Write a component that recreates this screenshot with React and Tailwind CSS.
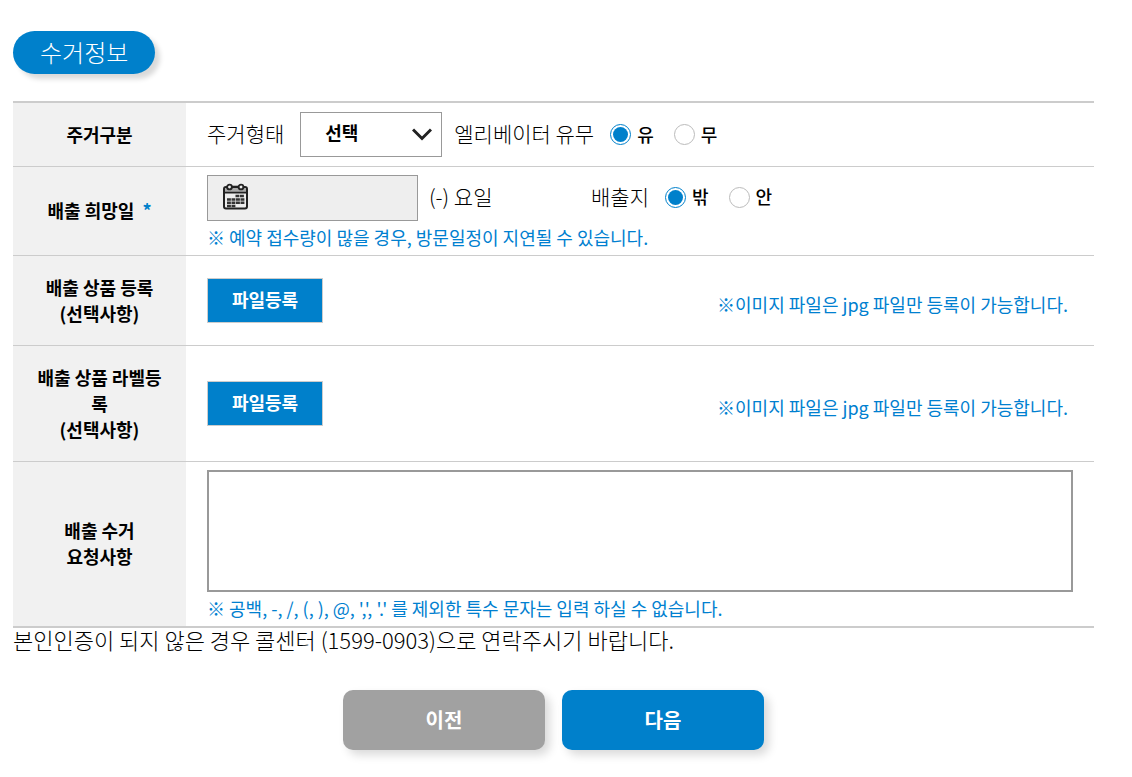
import React from "react";

function HeadCell({ children, last }) {
  return (
    <th
      scope="row"
      className={`w-[173px] bg-[#f1f1f1] px-5 pt-0 pb-[2px] text-center text-[18px] leading-[26px] font-bold break-all ${
        last ? "" : "border-b border-[#cccccc]"
      }`}
    >
      {children}
    </th>
  );
}

function Cell({ children, last, className }) {
  return (
    <td className={`px-[21px] ${className} ${last ? "" : "border-b border-[#cccccc]"}`}>
      {children}
    </td>
  );
}

function Radio({ name, label, defaultChecked }) {
  return (
    <label className="flex items-center gap-[6px] text-[18px] leading-[26px] font-medium">
      <input
        type="radio"
        name={name}
        defaultChecked={defaultChecked}
        className="size-[21px] appearance-none rounded-full border border-[#bbbbbb] bg-white bg-clip-content p-[2px] checked:border-[#0080cb] checked:bg-[#0080cb]"
      />
      <span className="pb-[2px]">{label}</span>
    </label>
  );
}

function Note({ children, className = "" }) {
  return (
    <p className={`text-[18px] leading-[26px] text-[#0080d0] ${className}`}>{children}</p>
  );
}

function CalendarIcon() {
  return (
    <svg
      aria-hidden="true"
      className="pointer-events-none absolute top-2 left-4 h-[27px] w-[25px]"
      viewBox="0 0 25 27"
      fill="none"
      stroke="#222222"
    >
      <rect x="1" y="4" width="23" height="21.5" rx="2" strokeWidth="2" />
      <path d="M2 6.5h21" stroke="#aaaaaa" strokeWidth="3" />
      <path d="M1.5 9.5h22" strokeWidth="2" />
      <path d="M8 3.5h9" strokeWidth="1.6" />
      <circle cx="6.5" cy="4" r="2.4" fill="#eeeeee" strokeWidth="1.9" />
      <circle cx="18" cy="4" r="2.4" fill="#eeeeee" strokeWidth="1.9" />
      <path
        d="M12.5 13h9M4 16.5h17.5M4 19.7h17.5M4 22.9h9"
        stroke="#333333"
        strokeWidth="2.5"
        strokeDasharray="3.9 .6"
      />
    </svg>
  );
}

function FileRow({ id }) {
  return (
    <div className="flex items-center justify-between pr-[5px]">
      <button
        type="button"
        aria-describedby={id}
        className="h-[45px] w-[116px] border border-[#cccccc] bg-[#0080cb] pb-[3px] text-[18px] leading-[26px] font-bold text-white"
      >
        파일등록
      </button>
      <div id={id}>
        <Note className="pt-[6px]">※이미지 파일은 jpg 파일만 등록이 가능합니다.</Note>
      </div>
    </div>
  );
}

export default function App() {
  return (
    <main className="bg-white pt-[31px] pr-[38px] pb-6 pl-[13px] font-['Noto_Sans_CJK_KR',sans-serif] text-black">
      <h1 className="mb-[27px] w-fit rounded-full bg-[#0080cb] px-[27px] pb-[2px] text-[24px] leading-[41px] font-light text-white shadow-[5px_5px_5px_rgba(0,0,0,0.15)]">
        수거정보
      </h1>

      <form onSubmit={(e) => e.preventDefault()}>
        <table className="w-full table-fixed border-separate border-spacing-0 border-y-2 border-[#cccccc]">
          <tbody>
            <tr>
              <HeadCell>주거구분</HeadCell>
              <Cell className="py-[9px]">
                <div className="flex items-center">
                  <label
                    htmlFor="housing"
                    className="pb-1 text-[21px] leading-[26px] font-light"
                  >
                    주거형태
                  </label>
                  <div className="relative ml-4">
                    <select
                      id="housing"
                      className="block h-[45px] w-[142px] appearance-none border border-[#999999] bg-white pr-10 pb-1 pl-6 text-[18px] font-bold"
                    >
                      <option>선택</option>
                    </select>
                    <svg
                      aria-hidden="true"
                      className="pointer-events-none absolute top-4 right-[10px] h-[13px] w-5"
                      viewBox="0 0 20 13"
                      fill="none"
                      stroke="#222222"
                      strokeWidth="3"
                    >
                      <path d="M1 1.5l9 9 9-9" />
                    </svg>
                  </div>
                  <span className="ml-3 pb-1 text-[21px] leading-[26px] font-light">
                    엘리베이터 유무
                  </span>
                  <div className="ml-4 flex gap-5">
                    <Radio name="elevator" label="유" defaultChecked />
                    <Radio name="elevator" label="무" />
                  </div>
                </div>
              </Cell>
            </tr>

            <tr>
              <HeadCell>
                배출 희망일 <span className="ml-1 text-[#0080cb]">*</span>
              </HeadCell>
              <Cell className="pt-2 pb-1">
                <div className="flex items-center">
                  <div className="relative">
                    <input
                      type="text"
                      readOnly
                      aria-label="배출 희망일"
                      className="block h-[46px] w-[211px] border border-[#999999] bg-[#eeeeee] pr-2 pl-12 text-[18px]"
                    />
                    <CalendarIcon />
                  </div>
                  <span className="ml-[11px] w-[162px] pb-1 text-[21px] leading-[26px] font-light">
                    (-) 요일
                  </span>
                  <span className="pb-1 text-[21px] leading-[26px] font-light">배출지</span>
                  <div className="ml-4 flex gap-5 pb-[2px]">
                    <Radio name="place" label="밖" defaultChecked />
                    <Radio name="place" label="안" />
                  </div>
                </div>
                <Note className="mt-[3px] pb-px">
                  ※ 예약 접수량이 많을 경우, 방문일정이 지연될 수 있습니다.
                </Note>
              </Cell>
            </tr>

            <tr>
              <HeadCell>
                배출 상품 등록
                <br />
                (선택사항)
              </HeadCell>
              <Cell className="py-[22px]">
                <FileRow id="photo-note" />
              </Cell>
            </tr>

            <tr>
              <HeadCell>
                배출 상품 라벨등록
                <br />
                (선택사항)
              </HeadCell>
              <Cell className="py-[35px]">
                <FileRow id="label-note" />
              </Cell>
            </tr>

            <tr>
              <HeadCell last>
                <label htmlFor="request">
                  배출 수거
                  <br />
                  요청사항
                </label>
              </HeadCell>
              <Cell last className="pt-2 pb-1">
                <textarea
                  id="request"
                  className="block h-[122px] w-full resize-none border-2 border-[#999999] p-2 text-[18px]"
                />
                <Note className="mt-[3px] pb-px">
                  ※ 공백, -, /, (, ), @, ',', '.' 를 제외한 특수 문자는 입력 하실 수 없습니다.
                </Note>
              </Cell>
            </tr>
          </tbody>
        </table>

        <p className="text-[22px] leading-[22px] font-light">
          본인인증이 되지 않은 경우 콜센터 (1599-0903)으로 연락주시기 바랍니다.
        </p>

        <div className="mt-10 flex justify-center gap-[17px]">
          <button
            type="button"
            className="h-[60px] w-[202px] rounded-[10px] bg-[#a1a1a1] text-[20px] font-bold text-white shadow-[5px_5px_10px_rgba(0,0,0,0.15)]"
          >
            이전
          </button>
          <button
            type="submit"
            className="h-[60px] w-[202px] rounded-[10px] bg-[#0080cb] text-[20px] font-bold text-white shadow-[5px_5px_10px_rgba(0,0,0,0.15)]"
          >
            다음
          </button>
        </div>
      </form>
    </main>
  );
}
